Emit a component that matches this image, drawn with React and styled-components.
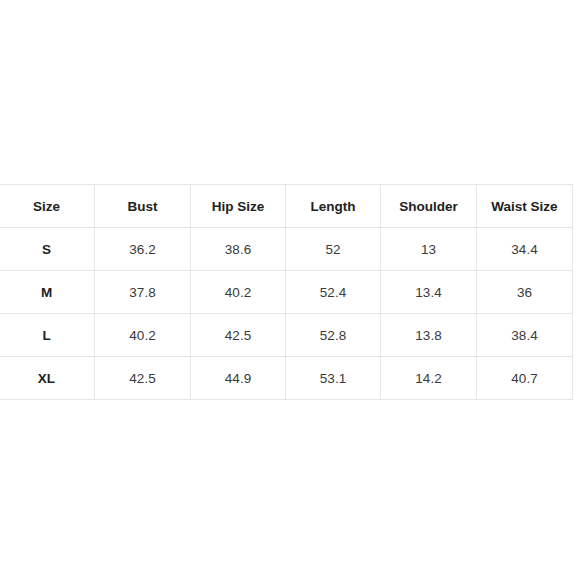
import React from 'react';
import styled, { createGlobalStyle } from 'styled-components';

const GlobalStyle = createGlobalStyle`
  html, body {
    margin: 0;
    padding: 0;
    background: #ffffff;
  }
  body {
    font-family: "Liberation Sans", Arial, sans-serif;
  }
`;

const Page = styled.div`
  width: 580px;
  height: 580px;
  overflow: hidden;
  padding-top: 184px;
  box-sizing: border-box;
`;

const Table = styled.table`
  border-collapse: collapse;
  margin-left: -2px;
  table-layout: fixed;
  width: 575px;
`;

const Cell = styled.td`
  border: 1px solid #e6e6e6;
  height: 42px;
  padding: 0;
  text-align: center;
  vertical-align: middle;
  font-size: 13.5px;
  color: ${(p) => (p.$bold ? '#222' : '#3a3a3a')};
  font-weight: ${(p) => (p.$bold ? 700 : 400)};
`;

const widths = [96, 96, 95, 95, 96, 96];
const headers = ['Size', 'Bust', 'Hip Size', 'Length', 'Shoulder', 'Waist Size'];
const rows = [
  ['S', '36.2', '38.6', '52', '13', '34.4'],
  ['M', '37.8', '40.2', '52.4', '13.4', '36'],
  ['L', '40.2', '42.5', '52.8', '13.8', '38.4'],
  ['XL', '42.5', '44.9', '53.1', '14.2', '40.7'],
];

export default function App() {
  return (
    <>
      <GlobalStyle />
      <Page>
        <Table>
          <colgroup>
            {widths.map((w, i) => (
              <col key={i} style={{ width: w }} />
            ))}
          </colgroup>
          <tbody>
            <tr>
              {headers.map((h) => (
                <Cell key={h} $bold>{h}</Cell>
              ))}
            </tr>
            {rows.map((r) => (
              <tr key={r[0]}>
                {r.map((v, i) => (
                  <Cell key={i} $bold={i === 0}>{v}</Cell>
                ))}
              </tr>
            ))}
          </tbody>
        </Table>
      </Page>
    </>
  );
}
